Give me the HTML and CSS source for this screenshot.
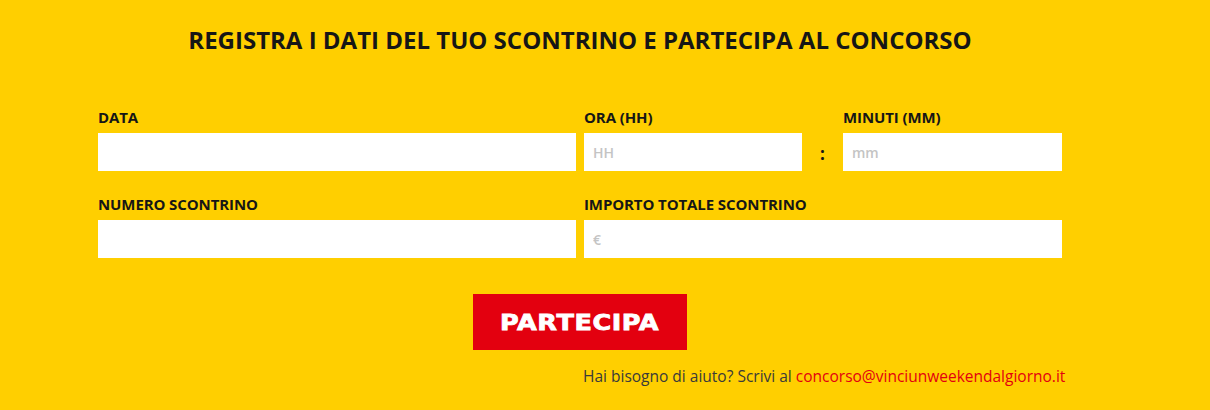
FILE: index.html
```html
<!DOCTYPE html>
<html lang="it">
<head>
<meta charset="utf-8">
<title>Concorso</title>
<link rel="stylesheet" href="styles.css">
</head>
<body>
<div class="page">
  <h1 class="title">REGISTRA I DATI DEL TUO SCONTRINO E PARTECIPA AL CONCORSO</h1>
  <form class="form">
    <div class="row">
      <div class="field">
        <label class="label">DATA</label>
        <input class="input" type="text">
      </div>
      <div class="field">
        <div class="time-labels">
          <label class="label">ORA (HH)</label>
          <label class="label">MINUTI (MM)</label>
        </div>
        <div class="time">
          <input class="input" type="text" placeholder="HH">
          <span class="colon">:</span>
          <input class="input" type="text" placeholder="mm">
        </div>
      </div>
    </div>
    <div class="row">
      <div class="field">
        <label class="label">NUMERO SCONTRINO</label>
        <input class="input" type="text">
      </div>
      <div class="field">
        <label class="label">IMPORTO TOTALE SCONTRINO</label>
        <input class="input" type="text" placeholder="€">
      </div>
    </div>
    <div class="actions">
      <button class="btn" type="button"><span class="btn-text">PARTECIPA</span></button>
    </div>
    <p class="help">Hai bisogno di aiuto? Scrivi al <a class="mail" href="#">concorso@vinciunweekendalgiorno.it</a></p>
  </form>
</div>
</body>
</html>
```
FILE: styles.css
```css
html, body {
  margin: 0;
  padding: 0;
  background: #ffcf00;
}
body {
  font-family: "Open Sans", "Liberation Sans", sans-serif;
  color: #1a1a1a;
  width: 1210px;
  height: 410px;
  overflow: hidden;
}
.page {
  width: 964px;
  margin-left: 98px;
  padding-top: 24px;
}
.title {
  margin: 0;
  text-align: center;
  font-size: 24px;
  font-weight: 700;
  line-height: 32px;
  letter-spacing: 0;
  color: #161616;
}
.form {
  margin-top: 52px;
}
.row {
  display: grid;
  grid-template-columns: 478px 478px;
  column-gap: 8px;
  margin-bottom: 24px;
}
.field {
  display: flex;
  flex-direction: column;
}
.time-labels {
  display: grid;
  grid-template-columns: 259px 219px;
}
.label {
  font-size: 15px;
  font-weight: 700;
  line-height: 18px;
  height: 18px;
  margin-bottom: 7px;
  letter-spacing: -0.1px;
  color: #161616;
}
.input {
  box-sizing: border-box;
  height: 38px;
  border: 0;
  margin: 0;
  padding: 0 9px;
  background: #fff;
  font-family: "Open Sans", "Liberation Sans", sans-serif;
  font-size: 14px;
  font-weight: 600;
  color: #333;
  outline: none;
}
.input::placeholder {
  color: #c4c4c4;
}
.time {
  display: grid;
  grid-template-columns: 218px 41px 219px;
}
.time .input {
  width: 100%;
}
.colon {
  display: flex;
  align-items: center;
  justify-content: center;
  font-size: 17px;
  font-weight: 700;
  color: #161616;
  padding-top: 2px;
}
.actions {
  display: flex;
  justify-content: center;
  margin-top: 36px;
}
.btn {
  width: 214px;
  height: 56px;
  border: 0;
  background: #e3000f;
  color: #fff;
  font-family: "DejaVu Sans", "Liberation Sans", sans-serif;
  font-weight: 700;
  font-size: 22px;
  cursor: pointer;
  padding: 0;
}
.btn-text {
  display: inline-block;
  transform: scaleX(1.16);
  letter-spacing: 0.5px;
  -webkit-text-stroke: 0.8px #fff;
}
.help {
  margin: 17px -20px 0 485px;
  font-size: 15.5px;
  line-height: 18px;
  color: #3a3a3a;
  white-space: nowrap;
}
.mail {
  color: #e3000f;
  text-decoration: none;
}
```
